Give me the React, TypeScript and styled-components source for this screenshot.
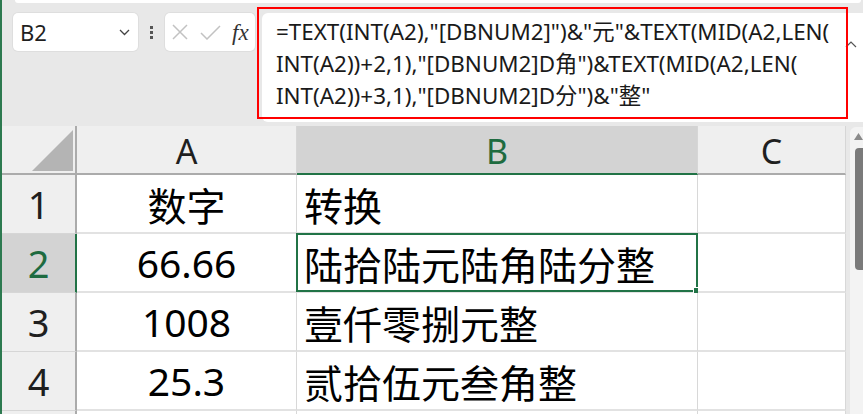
import React from "react";
import styled, { createGlobalStyle, css } from "styled-components";

const GREEN = "#217346";
const FONT = `"Noto Sans", "Noto Sans CJK SC", sans-serif`;

const Global = createGlobalStyle`
  * { box-sizing: border-box; }
  html, body { margin: 0; padding: 0; background: #e8e8e8; }
  body { font-family: ${FONT}; }
`;

const Frame = styled.div`
  width: 863px;
  height: 414px;
  overflow: hidden;
  display: flex;
  flex-direction: column;
  background: #e8e8e8;
  border-left: 2px solid #2d7a50;
`;

const RibbonEdge = styled.div`
  height: 3px;
  margin: 0 2px 0 13px;
  background: #ffffff;
  border-radius: 0 0 6px 6px;
`;

const FormulaBar = styled.div`
  height: 123px;
  display: flex;
  align-items: flex-start;
  padding: 10px 0 0 11px;
`;

const Box = styled.div`
  height: 38px;
  background: #ffffff;
  border-radius: 5px;
  box-shadow: 0 0 0 1px rgba(0, 0, 0, 0.04);
  display: flex;
  align-items: center;
`;

const NameBox = styled(Box)`
  width: 125px;
  padding: 0 8px 0 7px;
  justify-content: space-between;
  font-size: 22px;
  color: #1f1f1f;
`;

const Dots = styled.div`
  margin: 0 12px;
  height: 38px;
  display: flex;
  flex-direction: column;
  justify-content: center;
  gap: 2px;
  span {
    width: 3px;
    height: 3px;
    background: #555;
  }
`;

const FxBox = styled(Box)`
  width: 90px;
  padding-left: 7px;
  gap: 12px;
`;

const FxLabel = styled.span`
  font-family: "Liberation Serif", "DejaVu Serif", serif;
  font-style: italic;
  font-size: 23px;
  color: #333;
  margin-left: -1px;
  line-height: 1;
`;

const FormulaBox = styled.div`
  position: relative;
  margin-left: 7px;
  flex: 1;
  height: 109px;
  background: #ffffff;
  border-radius: 6px 0 0 6px;
  display: flex;
  padding: 3px 6px 0 14px;
`;

const FormulaText = styled.div`
  flex: 1;
  font-size: 22.4px;
  line-height: 32px;
  color: #1a1a1a;
  white-space: nowrap;
`;

const Caret = styled.div`
  width: 12px;
  padding-top: 15px;
`;

const Highlight = styled.div`
  position: absolute;
  left: -5px;
  top: -6px;
  width: 591px;
  height: 112px;
  border: 2px solid #ff0000;
  pointer-events: none;
`;

const SheetArea = styled.div`
  display: flex;
  flex: 1;
  min-height: 0;
`;

const Grid = styled.div`
  display: grid;
  grid-template-columns: 75px 220px 401px 148px;
  grid-template-rows: 49px repeat(5, 59px);
`;

const Corner = styled.div`
  background: #efefef;
  border-right: 2px solid #ababab;
  border-bottom: 2px solid #ababab;
  display: flex;
  justify-content: flex-end;
  align-items: flex-end;
  padding: 0 2px 2px 0;
`;

const Triangle = styled.div`
  width: 41px;
  height: 41px;
  background: #b4b4b4;
  clip-path: polygon(100% 0, 100% 100%, 0 100%);
`;

const ColHeader = styled.div<{ $active?: boolean }>`
  background: #efefef;
  border-bottom: 2px solid #ababab;
  border-right: 1px solid #d6d6d6;
  display: flex;
  align-items: center;
  justify-content: center;
  font-size: 34px;
  color: #1f1f1f;
  padding-top: 2px;
  ${(p) =>
    p.$active &&
    css`
      background: #d3d3d3;
      border-bottom-color: ${GREEN};
      color: #1e6b40;
    `}
`;

const RowHeader = styled.div<{ $active?: boolean }>`
  background: #efefef;
  border-right: 2px solid #ababab;
  border-bottom: 1px solid #d6d6d6;
  display: flex;
  align-items: center;
  justify-content: center;
  font-size: 38px;
  color: #1f1f1f;
  ${(p) =>
    p.$active &&
    css`
      background: #d3d3d3;
      border-right-color: ${GREEN};
      color: #1e6b40;
    `}
`;

const Cell = styled.div<{ $align?: "center" | "left" }>`
  position: relative;
  background: #ffffff;
  border-right: 1px solid #d8d8d8;
  border-bottom: 2px solid #e2e2e2;
  display: flex;
  align-items: center;
  justify-content: ${(p) => (p.$align === "center" ? "center" : "flex-start")};
  padding: 0 7px;
  font-size: 39px;
  color: #000;
  white-space: nowrap;
`;

const Selection = styled.div`
  position: absolute;
  inset: -1px -1px -1px -1px;
  border: 2px solid ${GREEN};
  pointer-events: none;
`;

const FillHandle = styled.div`
  position: absolute;
  right: -5px;
  bottom: -5px;
  width: 8px;
  height: 8px;
  background: ${GREEN};
  border: 1px solid #ffffff;
`;

const ScrollTrack = styled.div`
  margin: 1px 0 0 4px;
  width: 13px;
  background: #f3f3f3;
  border-radius: 6px 0 0 0;
  display: flex;
  flex-direction: column;
  align-items: flex-end;
  padding-top: 6px;
`;

const ScrollArrow = styled.div`
  width: 9px;
  height: 7px;
  background: #8a8a8a;
  clip-path: polygon(50% 0, 100% 100%, 0 100%);
`;

const ScrollThumb = styled.div`
  margin-top: 8px;
  width: 8px;
  height: 122px;
  background: #7a7a7a;
  border-radius: 4px 0 0 4px;
`;

const rows = [
  { n: "1", a: "数字", b: "转换" },
  { n: "2", a: "66.66", b: "陆拾陆元陆角陆分整", active: true },
  { n: "3", a: "1008", b: "壹仟零捌元整" },
  { n: "4", a: "25.3", b: "贰拾伍元叁角整" },
  { n: "", a: "", b: "" },
];

export default function App() {
  return (
    <>
      <Global />
      <Frame>
        <RibbonEdge />
        <FormulaBar>
          <NameBox>
            <span>B2</span>
            <svg width="11" height="7" viewBox="0 0 11 7">
              <path d="M1 1 L5.5 5.5 L10 1" fill="none" stroke="#444" strokeWidth="1.3" />
            </svg>
          </NameBox>
          <Dots>
            <span />
            <span />
            <span />
          </Dots>
          <FxBox>
            <svg width="16" height="16" viewBox="0 0 16 16">
              <path d="M1 1 L15 15 M15 1 L1 15" stroke="#c2c2c2" strokeWidth="1.5" fill="none" />
            </svg>
            <svg width="21" height="15" viewBox="0 0 21 15">
              <path d="M1 8 L7 14 L20 1" stroke="#c2c2c2" strokeWidth="1.5" fill="none" />
            </svg>
            <FxLabel>fx</FxLabel>
          </FxBox>
          <FormulaBox>
            <FormulaText>
              <div>=TEXT(INT(A2),"[DBNUM2]")&amp;"元"&amp;TEXT(MID(A2,LEN(</div>
              <div>INT(A2))+2,1),"[DBNUM2]D角")&amp;TEXT(MID(A2,LEN(</div>
              <div>INT(A2))+3,1),"[DBNUM2]D分")&amp;"整"</div>
            </FormulaText>
            <Caret>
              <svg width="12" height="7" viewBox="0 0 12 7">
                <path d="M1 6 L6 1 L11 6" fill="none" stroke="#555" strokeWidth="1.2" />
              </svg>
            </Caret>
            <Highlight />
          </FormulaBox>
        </FormulaBar>
        <SheetArea>
          <Grid>
            <Corner>
              <Triangle />
            </Corner>
            <ColHeader>A</ColHeader>
            <ColHeader $active>B</ColHeader>
            <ColHeader>C</ColHeader>
            {rows.map((r, i) => (
              <React.Fragment key={i}>
                <RowHeader $active={r.active}>{r.n}</RowHeader>
                <Cell $align="center">{r.a}</Cell>
                <Cell $align="left">
                  {r.b}
                  {r.active && (
                    <Selection>
                      <FillHandle />
                    </Selection>
                  )}
                </Cell>
                <Cell />
              </React.Fragment>
            ))}
          </Grid>
          <ScrollTrack>
            <ScrollArrow />
            <ScrollThumb />
          </ScrollTrack>
        </SheetArea>
      </Frame>
    </>
  );
}
